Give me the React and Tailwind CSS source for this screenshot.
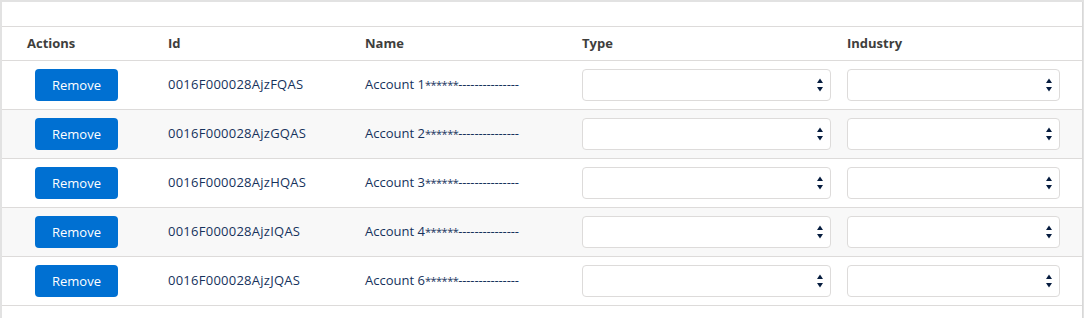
import React from "react";

const rows = [
  { id: "0016F000028AjzFQAS", name: "Account 1" },
  { id: "0016F000028AjzGQAS", name: "Account 2" },
  { id: "0016F000028AjzHQAS", name: "Account 3" },
  { id: "0016F000028AjzIQAS", name: "Account 4" },
  { id: "0016F000028AjzJQAS", name: "Account 6" },
];

function Arrows() {
  return (
    <svg width="8" height="16" viewBox="0 0 8 16" className="absolute right-[6px] top-[7px]">
      <polygon points="4,1.5 7,6 1,6" fill="#061c3f" />
      <polygon points="1,10 7,10 4,14.5" fill="#061c3f" />
    </svg>
  );
}

function Select({ w }) {
  return (
    <div className={`relative h-[32px] ${w} rounded-[4px] border border-[#dddbda] bg-white`}>
      <Arrows />
    </div>
  );
}

export default function App() {
  return (
    <div
      className="w-[1084px] h-[318px] bg-[#e2e2e2] pt-[2px] pl-[2px] overflow-hidden"
      style={{ fontFamily: '"Open Sans", "Noto Sans", sans-serif' }}
    >
      <div className="w-[1081px] h-[316px] bg-white border-r border-[#d8d8d8] text-[13px]">
        <div className="h-[25px] border-b border-[#dddbda]" />
        <div className="grid grid-cols-[166px_197px_217px_265px_1fr] h-[34px] border-b border-[#dddbda] items-center font-bold text-[#3e3e3c]">
          <div className="pl-[25px]">Actions</div>
          <div>Id</div>
          <div>Name</div>
          <div>Type</div>
          <div>Industry</div>
        </div>
        {rows.map((r, i) => (
          <div
            key={r.id}
            className={`grid grid-cols-[166px_197px_217px_265px_1fr] h-[49px] border-b border-[#dddbda] items-center text-[#16325c] ${
              i % 2 === 1 ? "bg-[#f8f8f8]" : "bg-white"
            }`}
          >
            <div className="pl-[33px]">
              <button className="w-[83px] h-[32px] rounded-[4px] bg-[#0070d2] text-white text-[13px] leading-none">
                Remove
              </button>
            </div>
            <div className="tracking-[0.25px]">{r.id}</div>
            <div className="whitespace-nowrap">
              {r.name}
              <span className="text-[11px] tracking-[-0.5px]">******</span>
              <span className="tracking-[-0.15px]">---------------</span>
            </div>
            <div>
              <Select w="w-[249px]" />
            </div>
            <div>
              <Select w="w-[213px]" />
            </div>
          </div>
        ))}
      </div>
    </div>
  );
}
